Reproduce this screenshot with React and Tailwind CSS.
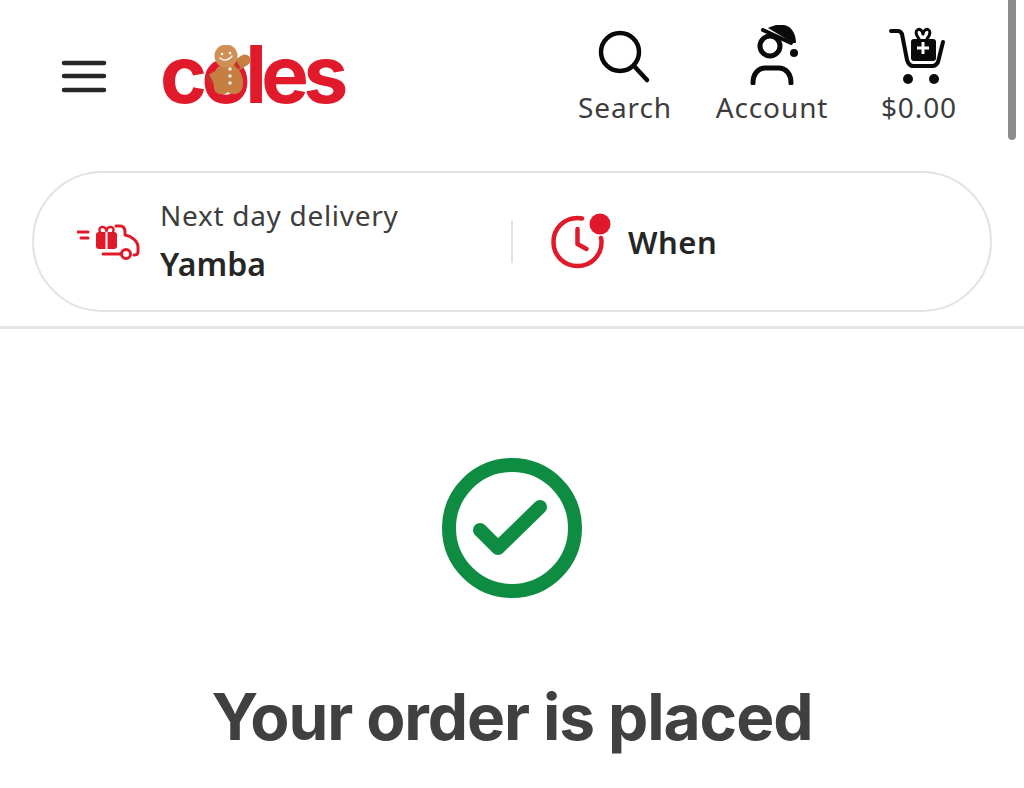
import { useState } from "react";

function MenuIcon() {
  return (
    <svg width="46" height="36" viewBox="0 0 46 36" fill="none" stroke="#262626" strokeWidth="4.500" strokeLinecap="round">
      <path d="M3 5h40M3 18h40M3 32h40" />
    </svg>
  );
}

function Gingerbread() {
  return (
    <svg className="absolute left-[46px] top-[4px]" width="46" height="50" viewBox="0 0 46 50">
      {/* arms, body and head */}
      <path d="M28 22 L39 15" stroke="#c67f42" strokeWidth="11" strokeLinecap="round" />
      <path d="M12 30 L7 33" stroke="#c67f42" strokeWidth="10" strokeLinecap="round" />
      <path d="M1 30 L6 39" stroke="#c9302c" strokeWidth="4" />
      <path d="M27 14 L33 24" stroke="#c9302c" strokeWidth="4" />
      <path d="M8 43 C6 31 9 19 20 19 C32 19 38 30 37 40 C36 50 26 51 22 47 C18 51 9 50 8 43z" fill="#c67f42" />
      <circle cx="20" cy="11" r="11.500" fill="#d08f55" />
      <path d="M14 13q6 5 12-2" stroke="#fff" strokeWidth="1.300" fill="none" strokeLinecap="round" />
      <circle cx="16" cy="9" r="1.300" fill="#fff" />
      <circle cx="24" cy="8" r="1.300" fill="#fff" />
      <circle cx="24" cy="24" r="1.800" fill="#f4ece2" />
      <circle cx="24" cy="31" r="1.800" fill="#f4ece2" />
      <circle cx="24" cy="38" r="1.800" fill="#f4ece2" />
    </svg>
  );
}

function SearchIcon() {
  return (
    <svg width="56" height="56" viewBox="0 0 56 56" fill="none" stroke="#0a0a0a" strokeWidth="4.500" strokeLinecap="round">
      <circle cx="24" cy="23" r="19" />
      <path d="M38 37 L51 51" />
    </svg>
  );
}

function AccountIcon() {
  return (
    <svg width="56" height="60" viewBox="0 0 56 60" fill="none" stroke="#0a0a0a" strokeWidth="5" strokeLinecap="round">
      <circle cx="27" cy="21" r="10" />
      <path d="M10 58C10 48 16 43 22 43H36C42 43 48 48 48 58" />
      <path d="M20 5 L48 18" strokeWidth="4" />
      <path d="M25 3C31 0 36-1 41 0 48 1 53 8 53 18H50z" fill="#0a0a0a" stroke="none" />
      <circle cx="51" cy="28" r="4" fill="#0a0a0a" stroke="none" />
    </svg>
  );
}

function CartIcon() {
  return (
    <svg width="58" height="60" viewBox="0 -3 58 60" fill="none" stroke="#0a0a0a" strokeWidth="4" strokeLinecap="round" strokeLinejoin="round">
      <path d="M2 3H9c2 0 3 1 4 3L18 32c1 3 3 6 6 6H44c3 0 4-2 5-4L54 14" />
      <path d="M30 11C22 1 33-2 34 6 35-2 46 1 38 11" strokeWidth="3" />
      <rect x="22" y="11" width="25" height="22" rx="3" fill="#0a0a0a" stroke="none" />
      <path d="M34 14v12M28 20h12" stroke="#fff" strokeWidth="3" strokeLinecap="butt" />
      <circle cx="19" cy="51" r="5" fill="#0a0a0a" stroke="none" />
      <circle cx="45" cy="51" r="5" fill="#0a0a0a" stroke="none" />
    </svg>
  );
}

function TruckIcon() {
  return (
    <svg width="64" height="36" viewBox="0 0 64 36" fill="none" stroke="#e01a2b" strokeWidth="3" strokeLinecap="round" strokeLinejoin="round">
      <path d="M1 8h10M4 14h7" />
      <rect x="19" y="8" width="21" height="17" rx="3" fill="#e01a2b" stroke="none" />
      <path d="M29.500 8v17" stroke="#fff" strokeWidth="2" />
      <path d="M23 8c-3-6 6-7 6.500-1 .5-6 9.500-5 6.500 1" strokeWidth="2.500" />
      <path d="M39 2h4c3 0 5 2 5 6v3c6 1 13 6 13 12v5c0 2-2 3-4 3" />
      <path d="M26 30h18" />
      <circle cx="49" cy="30" r="4.500" />
    </svg>
  );
}

function ClockIcon() {
  return (
    <svg width="64" height="60" viewBox="0 0 64 60" fill="none" stroke="#e01a2b" strokeWidth="4.500" strokeLinecap="round" strokeLinejoin="round">
      <path d="M33 6.500C31 6 30 6 28.500 6 15 6 4.500 16.500 4.500 30S15 54 28.500 54 52.500 43.500 52.500 30c0-1.500 0-3-.5-4" />
      <path d="M28.500 17v15l9 5" />
      <circle cx="51" cy="12" r="10.500" fill="#e01a2b" stroke="none" />
    </svg>
  );
}

function CheckIcon() {
  return (
    <svg width="140" height="140" viewBox="0 0 140 140" fill="none" stroke="#0d8c42" strokeLinecap="round" strokeLinejoin="round">
      <circle cx="70" cy="70" r="63" strokeWidth="14" />
      <path d="M38 72 L56 90 L98 49" strokeWidth="14" />
    </svg>
  );
}

function NavItem({ label, icon }) {
  return (
    <button className="flex w-[147px] flex-col items-center">
      <div className="flex h-[66px] items-end justify-center">{icon}</div>
      <span className="mt-[3px] pl-[3px] text-[28px] leading-[38px] tracking-[0.9px] text-[#3d3d3d]">{label}</span>
    </button>
  );
}

export default function App() {
  const [when] = useState("When");

  return (
    <div className="relative h-screen overflow-hidden bg-white font-['Noto_Sans','Open_Sans',sans-serif]">
      {/* Scrollbar thumb */}
      <div className="absolute right-[8px] top-0 h-[140px] w-[8px] rounded-b-full bg-[#8c8c8c]" />

      <header className="flex h-[171px] items-start justify-between pl-[61px] pr-[33px]">
        <div className="flex items-center pt-[41px]">
          <MenuIcon />
          <div className="relative ml-[53px] h-[70px] w-[190px]">
            <span className="mt-[-2px] block font-['Inter',sans-serif] text-[80px] font-bold leading-[70px] tracking-[-5.500px] text-[#e01a2b]">
              coles
            </span>
            <Gingerbread />
          </div>
        </div>
        <nav className="flex pt-[19px]">
          <NavItem label="Search" icon={<SearchIcon />} />
          <NavItem label="Account" icon={<AccountIcon />} />
          <NavItem label="$0.00" icon={<CartIcon />} />
        </nav>
      </header>

      <div className="px-[32px]">
        <div className="flex h-[141px] items-center rounded-full border-2 border-[#e2e2e2]">
          <div className="flex w-[477px] items-center pl-[43px]">
            <TruckIcon />
            <div className="ml-[19px] flex flex-col">
              <span className="mb-[8px] text-[28px] leading-[34px] tracking-[0.7px] text-[#3d3d3d]">Next day delivery</span>
              <span className="mb-[-2px] text-[32px] font-semibold leading-[48px] text-[#262626]">Yamba</span>
            </div>
          </div>
          <div className="h-[42px] w-[2px] bg-[#e2e2e2]" />
          <div className="ml-[36px] flex items-center">
            <ClockIcon />
            <span className="ml-[15px] pt-[2px] text-[31px] font-semibold tracking-[0.5px] text-[#262626]">{when}</span>
          </div>
        </div>
      </div>

      <div className="mt-[14px] h-[3px] bg-[#e4e4e4]" />

      <main className="flex flex-col items-center pt-[129px]">
        <CheckIcon />
        <h1 className="mt-[79px] font-['Inter',sans-serif] text-[64px] font-bold leading-[80px] tracking-[-1.100px] text-[#404040]">
          Your order is placed
        </h1>
      </main>
    </div>
  );
}
